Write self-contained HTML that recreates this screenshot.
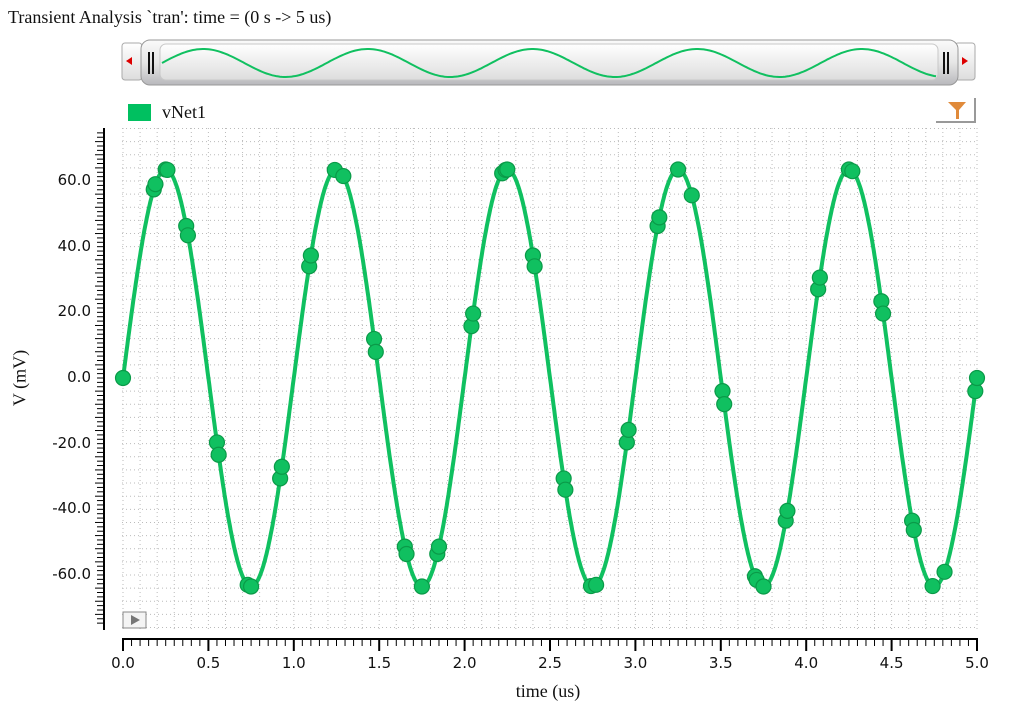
<!DOCTYPE html>
<html><head><meta charset="utf-8"><style>
body{margin:0;background:#fff;width:1013px;height:716px;overflow:hidden;position:relative;font-family:"Liberation Serif",serif}
.t{position:absolute;white-space:nowrap;color:#111}
</style></head><body>
<div class="t" style="left:8px;top:7px;font-size:18px">Transient Analysis `tran': time = (0 s -&gt; 5 us)</div>
<svg id="s" width="1013" height="716" style="position:absolute;left:0;top:0">
<defs>
<linearGradient id="g" x1="0" y1="0" x2="0" y2="1"><stop offset="0" stop-color="#fafafa"/><stop offset="0.5" stop-color="#e6e6e6"/><stop offset="1" stop-color="#b8b8bc"/></linearGradient>
<linearGradient id="f" x1="0" y1="0" x2="0" y2="1"><stop offset="0" stop-color="#fff"/><stop offset="1" stop-color="#ddd"/></linearGradient>
</defs>
<rect x="122" y="43" width="20" height="37" rx="3" fill="url(#f)" stroke="#aaa"/>
<rect x="955" y="43" width="20" height="37" rx="3" fill="url(#f)" stroke="#aaa"/>
<polygon points="126,61 132,57 132,65" fill="#d00"/>
<polygon points="968,61 962,57 962,65" fill="#d00"/>
<rect x="141" y="40" width="817" height="45" rx="9" fill="url(#g)" stroke="#999"/>
<rect x="160" y="44" width="778" height="36" rx="6" fill="url(#f)" stroke="#c8c8c8"/>
<rect x="148" y="52" width="2" height="22" fill="#111"/><rect x="152" y="52" width="2" height="22" fill="#111"/>
<rect x="943" y="52" width="2" height="22" fill="#111"/><rect x="947" y="52" width="2" height="22" fill="#111"/>
<g id="dyn"></g>
<rect x="128" y="104" width="23" height="17" fill="#00c060"/>
<path d="M936 122 H975 V98" fill="none" stroke="#999" stroke-width="2"/>
<polygon points="948,102 966,102 959,110 959,119 956,119 956,110" fill="#e08a3a"/>
<rect x="123" y="612" width="23" height="16" fill="#f4f4f4" stroke="#888"/>
<polygon points="131,615 140,620 131,625" fill="#777"/>
</svg>
<div class="t" style="left:162px;top:102px;font-size:18px">vNet1</div>
<div class="t" style="left:548px;top:681px;font-size:18px;transform:translateX(-50%)">time (us)</div>
<div class="t" style="left:20px;top:378px;font-size:18px;transform:translate(-50%,-50%) rotate(-90deg)">V (mV)</div>
<div id="lab"></div>
<script>
var X=function(t){return 123+t*170.8},Y=function(v){return 378-v*3.283};
var h='',i;
for(i=0;i<=50;i++){h+='<line x1="'+(X(i*0.1))+'" y1="128" x2="'+X(i*0.1)+'" y2="630" stroke="#bbb" stroke-dasharray="1,3"/>';}
for(i=-19;i<=19;i++){var y=Y(i*4);if(y<128||y>630)continue;h+='<line x1="122" y1="'+y+'" x2="977" y2="'+y+'" stroke="#bbb" stroke-dasharray="1,3"/>';}
h+='<line x1="104" y1="128" x2="104" y2="630" stroke="#000" stroke-width="2"/>';
for(i=-56;i<=56;i++){var y=Y(i*4/3);if(y<129||y>629)continue;var L=(i%15==0)?14:(i%3==0?9:7);h+='<line x1="'+(104-L+ (i%15==0?7:0))+'" y1="'+y+'" x2="104" y2="'+y+'" stroke="#000"/>';}
h+='<line x1="122" y1="639" x2="978" y2="639" stroke="#000" stroke-width="2"/>';
for(i=0;i<=100;i++){var x=X(i*0.05);var L=(i%10==0)?12:7;h+='<line x1="'+x+'" y1="639" x2="'+x+'" y2="'+(639+L)+'" stroke="#000" stroke-width="'+(i%10==0?2:1)+'"/>';}
var p='';for(i=0;i<=1000;i++){var t=i*0.005;p+=(i?'L':'M')+X(t).toFixed(1)+' '+Y(63.5*Math.sin(2*Math.PI*t)).toFixed(1);}
h+='<path d="'+p+'" fill="none" stroke="#10c060" stroke-width="4"/>';
var ts=[0,.18,.19,.25,.26,.37,.38,.55,.56,.73,.75,.92,.93,1.09,1.1,1.24,1.29,1.47,1.48,1.65,1.66,1.75,1.84,1.85,2.04,2.05,2.22,2.24,2.25,2.4,2.41,2.58,2.59,2.74,2.77,2.95,2.96,3.13,3.14,3.25,3.33,3.51,3.52,3.7,3.71,3.75,3.88,3.89,4.07,4.08,4.25,4.27,4.44,4.45,4.62,4.63,4.74,4.81,4.99,5.0];
ts.forEach(function(t){h+='<circle cx="'+X(t)+'" cy="'+Y(63.5*Math.sin(2*Math.PI*t))+'" r="7.5" fill="#10c060" stroke="#0a9a48" stroke-width="1.2"/>';});
var q='';for(i=0;i<=400;i++){var x=162+i*774/400;q+=(i?'L':'M')+x.toFixed(1)+' '+(63-14*Math.sin(2*Math.PI*i/400*4.7)).toFixed(1);}
h+='<path d="'+q+'" fill="none" stroke="#10c060" stroke-width="2"/>';
document.getElementById('dyn').innerHTML=h;
var l='';
[60,40,20,0,-20,-40,-60].forEach(function(v){l+='<div class="t" style="font-family:DejaVu Sans,sans-serif;font-size:15px;right:'+(1013-91)+'px;top:'+(Y(v)-10)+'px">'+v.toFixed(1)+'</div>';});
for(i=0;i<=10;i++){l+='<div class="t" style="font-family:DejaVu Sans,sans-serif;font-size:15px;left:'+X(i*0.5)+'px;top:654px;transform:translateX(-50%)">'+(i*0.5).toFixed(1)+'</div>';}
document.getElementById('lab').innerHTML=l;
</script>
</body></html>
